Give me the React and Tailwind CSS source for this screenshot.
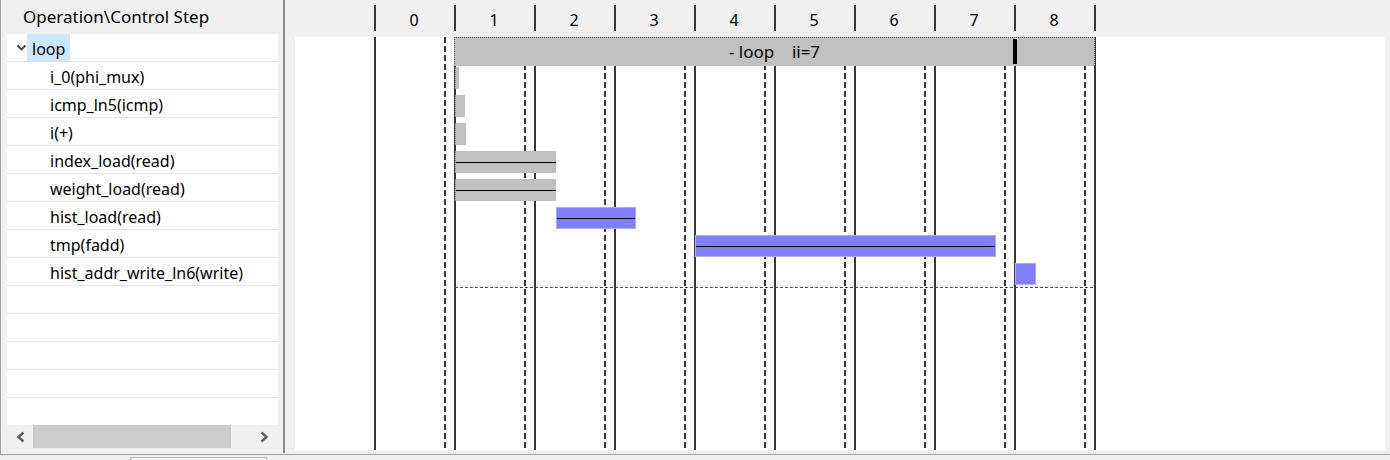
const ops = [
    'i_0(phi_mux)',
    'icmp_ln5(icmp)',
    'i(+)',
    'index_load(read)',
    'weight_load(read)',
    'hist_load(read)',
    'tmp(fadd)',
    'hist_addr_write_ln6(write)',
];

// bars per operation row, placed on the control-step grid (80px per step)
const bars = [
    { cls: 'ml-[160px] w-[4px] bg-[#c0c0c0] border-l border-dotted border-[#888]', mid: false },
    { cls: 'ml-[160px] w-[10px] bg-[#c0c0c0] border-l border-dotted border-[#888]', mid: false },
    { cls: 'ml-[160px] w-[11px] bg-[#c0c0c0] border-l border-dotted border-[#888]', mid: false },
    { cls: 'ml-[160px] w-[101px] bg-[#c0c0c0] border-l border-dotted border-[#888]', mid: true },
    { cls: 'ml-[160px] w-[101px] bg-[#c0c0c0] border-l border-dotted border-[#888]', mid: true },
    { cls: 'ml-[261px] w-[80px] bg-[#8080ff] border border-[#adadea]', mid: true },
    { cls: 'ml-[400px] w-[301px] bg-[#8080ff] border border-[#adadea]', mid: true },
    { cls: 'ml-[720px] w-[21px] bg-[#8080ff] border border-[#adadea]', mid: false },
];

const steps = [0, 1, 2, 3, 4, 5, 6, 7, 8];

const Chevron = ({ dir }) => (
    <svg width="10" height="12" viewBox="0 0 10 12">
        <polyline
            points={dir === 'left' ? '7.5,1.5 2.5,6 7.5,10.5' : '2.5,1.5 7.5,6 2.5,10.5'}
            fill="none"
            stroke="#606060"
            strokeWidth="2.4"
        />
    </svg>
);

const OperationTree = () => (
    <div className="w-[283px] flex flex-col border-l border-[#a0a0a0]">
        <div className="h-[34px] pl-[22px] pt-[7px] leading-[20px] text-[17px]">Operation\Control Step</div>
        <div className="ml-[6px] w-[271px] h-[391px] bg-white overflow-hidden">
            <div className="h-[28px] border-b border-[#e3e3e3] flex items-stretch">
                <div className="w-[20px] flex items-center justify-end pt-[1px]">
                    <svg width="11" height="8" viewBox="0 0 11 8">
                        <polyline points="1.5,1.5 5.5,5.5 9.5,1.5" fill="none" stroke="#404040" strokeWidth="1.8" />
                    </svg>
                </div>
                <div className="bg-[#cce8ff] px-[5px] pt-[3px] leading-[24px]">loop</div>
            </div>
            {ops.map((op) => (
                <div key={op} className="h-[28px] border-b border-[#e3e3e3] pl-[43px] pt-[3px] leading-[24px] whitespace-nowrap">
                    {op}
                </div>
            ))}
            {[0, 1, 2, 3, 4].map((i) => (
                <div key={i} className="h-[28px] border-b border-[#e3e3e3]" />
            ))}
        </div>
        <div className="ml-[6px] w-[271px] h-[23px] flex items-center">
            <div className="w-[26px] flex justify-center pl-[2px]">
                <Chevron dir="left" />
            </div>
            <div className="w-[198px] h-[23px] bg-[#cdcdcd]" />
            <div className="flex-1 flex justify-end pr-[9px]">
                <Chevron dir="right" />
            </div>
        </div>
    </div>
);

const ScheduleChart = () => (
    <div className="flex-1 flex flex-col pl-[10px] pr-[5px]">
        <div className="h-[37px] flex">
            <div className="w-[79px]" />
            {steps.map((s) => (
                <div key={s} className="w-[80px] flex">
                    <div className="w-[2px] h-[26px] mt-[5px] bg-[#383838]" />
                    <div className="flex-1 text-center pr-[2px] mt-[10px] leading-[20px]">{s}</div>
                </div>
            ))}
            <div className="w-[2px] h-[26px] mt-[5px] bg-[#383838]" />
        </div>
        <div className="relative h-[413px] bg-white">
            <svg className="absolute inset-0" width="1090" height="413">
                {Array.from({ length: 10 }, (_, i) => (
                    <line key={'s' + i} x1={80 + 80 * i} x2={80 + 80 * i} y1="0" y2="413" stroke="#383838" strokeWidth="2" />
                ))}
                {Array.from({ length: 9 }, (_, i) => (
                    <line
                        key={'d' + i}
                        x1={150 + 80 * i}
                        x2={150 + 80 * i}
                        y1="0"
                        y2="413"
                        stroke="#383838"
                        strokeWidth="2"
                        strokeDasharray="6 3"
                    />
                ))}
                <line x1="160" x2="800" y1="250.5" y2="250.5" stroke="#505050" strokeWidth="1" strokeDasharray="3 2" />
            </svg>
            <div className="relative">
                <div className="ml-[159px] w-[641px] h-[29px] bg-[#c0c0c0] border-t border-l border-r border-dotted border-[#555] relative text-center text-[17px] leading-[28px] whitespace-pre">
                    - loop    ii=7
                    <div className="absolute left-[558px] top-[1px] w-[4px] h-[25px] bg-black" />
                </div>
                <div className="mt-px">
                    {bars.map((b, i) => (
                        <div key={i} className="h-[28px]">
                            <div className={'h-[22px] flex items-center ' + b.cls}>
                                {b.mid && <div className="w-full h-px bg-black" />}
                            </div>
                        </div>
                    ))}
                </div>
            </div>
        </div>
    </div>
);

const App = () => {
    return (
        <div className="w-[1390px] h-[460px] bg-[#f0f0f0] overflow-hidden font-['Noto_Sans',sans-serif] text-[16px] text-black">
            <div className="flex h-[455px] border-b border-[#a0a0a0]">
                <OperationTree />
                <div className="w-[2px] h-[453px] bg-[#8a8a8a]" />
                <ScheduleChart />
            </div>
            <div className="h-[5px] pl-[130px]">
                <div className="w-[137px] h-[5px] mt-[2px] border-t border-l border-r border-[#b4b4b4] bg-[#f8f8f8]" />
            </div>
        </div>
    );
};

export default App;
